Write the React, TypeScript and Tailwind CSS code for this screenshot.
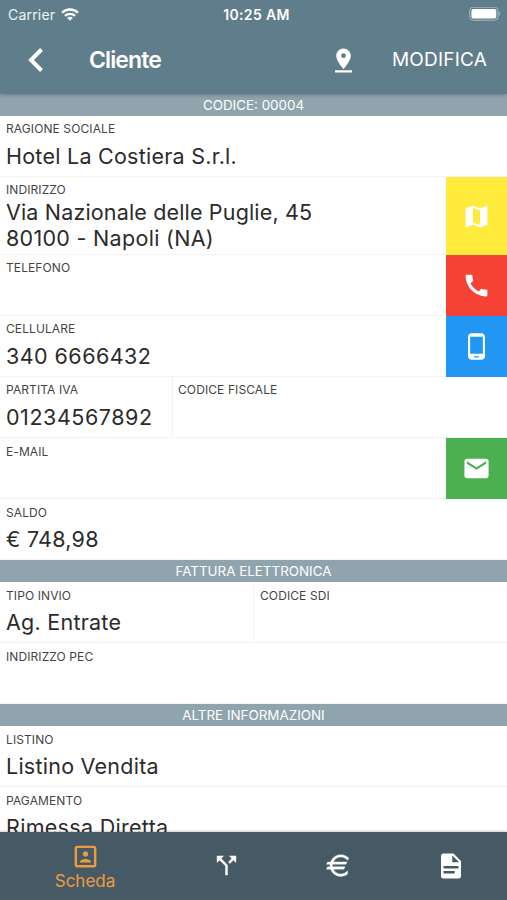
import type { ReactNode } from "react";
import {
    MdCall,
    MdCallSplit,
    MdEmail,
    MdMap,
    MdPhoneAndroid,
    MdPinDrop,
    MdPortrait,
} from "react-icons/md";

const SectionBar = ({ title }: { title: string }) => (
    <div className="h-[22px] shrink-0 bg-[#90a4ae] text-center text-[13.4px] leading-[22px] text-white">
        {title}
    </div>
);

type FieldProps = {
    label: string;
    value?: ReactNode;
    className?: string;
    valueClass?: string;
};

const Field = ({
    label,
    value,
    className = "flex-1",
    valueClass = "pt-[5.6px] tracking-[0.25px]",
}: FieldProps) => (
    <div className={`h-full pt-[5.35px] pl-1.5 ${className}`}>
        <div className="text-[12px] leading-4 tracking-[0.1px] text-[#444]">{label}</div>
        <div className={`text-[21.5px] leading-[26px] whitespace-nowrap text-[#2b2b2b] ${valueClass}`}>
            {value}
        </div>
    </div>
);

const Row = ({ children, height = "h-[61.05px]" }: { children: ReactNode; height?: string }) => (
    <div className={`flex shrink-0 shadow-[inset_0_-1px_0_#f3f3f3] ${height}`}>{children}</div>
);

const Action = ({ color, children }: { color: string; children: ReactNode }) => (
    <button className={`flex h-full w-[61px] items-center justify-center text-white ${color}`}>
        {children}
    </button>
);

const StatusBar = () => (
    <div className="grid h-7 grid-cols-3 items-center pr-[6px] pl-2 text-[14px] text-white">
        <div className="flex items-center gap-[6px] tracking-[0.2px] text-white/90">
            Carrier
            <svg width="18" height="13" viewBox="0 0 18 13" fill="none" stroke="white" strokeWidth="2.3">
                <path d="M1 4.8a11.4 11.4 0 0 1 16 0" />
                <path d="M4 7.9a7.2 7.2 0 0 1 10 0" />
                <path d="M9 12.8 6.2 10a4 4 0 0 1 5.6 0z" fill="white" stroke="none" />
            </svg>
        </div>
        <div className="pl-1 text-center font-semibold tracking-[0.35px] whitespace-nowrap">
            10:25 AM
        </div>
        <svg className="justify-self-end" width="32" height="15" viewBox="0 0 32 15">
            <rect x="0.7" y="0.2" width="28.3" height="13" rx="3.5" fill="none" stroke="#a9bac3" strokeWidth="1" />
            <rect x="2.4" y="1.9" width="24.9" height="9.6" rx="2" fill="white" />
            <path d="M30 4.500q2 2.200 0 4.400z" fill="#a9bac3" />
        </svg>
    </div>
);

const Header = () => (
    <header className="relative z-10 h-[94px] shrink-0 bg-[#607d8b] text-white shadow-[0_1px_4px_rgba(0,0,0,0.25)]">
        <StatusBar />
        <div className="flex h-[64px] items-center pr-5 pl-[27px]">
            <svg width="17" height="26" viewBox="0 0 17 26" fill="none" stroke="white" strokeWidth="4">
                <path d="M14.500 2.500 4 13l10.500 10.500" />
            </svg>
            <h1 className="ml-[45px] pt-px text-[23px] font-semibold tracking-[-0.9px]">Cliente</h1>
            <MdPinDrop className="ml-auto size-[29px]" />
            <span className="ml-[34px] pt-px text-[19px] tracking-[0.2px]">MODIFICA</span>
        </div>
    </header>
);

const TabBar = () => (
    <nav className="relative z-10 flex h-[68.5px] shrink-0 bg-[#455a64] text-white shadow-[0_-1px_2px_rgba(0,0,0,0.2)]">
        <div className="flex w-[170px] flex-col items-center pt-[10.500px] text-[#f09a40]">
            <MdPortrait className="size-[29px]" />
            <span className="-mt-[1.500px] text-[17px] leading-[22px]">Scheda</span>
        </div>
        <div className="flex w-[112px] items-center justify-center">
            <MdCallSplit className="size-[29px]" />
        </div>
        <div className="flex w-[112px] items-center justify-center">
            <svg className="size-[29px]" viewBox="0 0 24 24" fill="currentColor" stroke="currentColor" strokeWidth="0.3">
                <path d="M7.07 11 7 12l.07 1h10.28l-.85 2H7.67c1.13 2.36 3.54 4 6.33 4 2.23 0 4.22-1.04 5.5-2.67v2.79C18 20.3 16.07 21 14 21c-3.92 0-7.25-2.5-8.5-6H2l1-2h2.05L5 12l.05-1H2l1-2h2.5C6.75 5.5 10.08 3 14 3c2.5 0 4.8 1.04 6.43 2.71l-.86 2.04C18.29 6.08 16.27 5 14 5c-2.79 0-5.2 1.64-6.33 4h11.37l-.85 2z" />
            </svg>
        </div>
        <div className="flex w-[113px] items-center justify-center">
            <svg className="size-[30px]" viewBox="0 0 24 24" fill="currentColor">
                <path d="M13 9h5.5L13 3.500V9M6 2h8l6 6v12a2 2 0 0 1-2 2H6a2 2 0 0 1-2-2V4a2 2 0 0 1 2-2m9 16v-2H6v2h9m3-4v-2H6v2z" />
            </svg>
        </div>
    </nav>
);

const App = () => {
    return (
        <div className="flex h-screen w-full flex-col overflow-hidden bg-white font-[Inter,sans-serif]">
            <Header />
            <main className="flex min-h-0 flex-1 flex-col overflow-hidden">
                <SectionBar title="CODICE: 00004" />
                <Row>
                    <Field label="RAGIONE SOCIALE" value="Hotel La Costiera S.r.l." />
                </Row>
                <Row height="h-[78px]">
                    <Field
                        label="INDIRIZZO"
                        valueClass="pt-[1px]"
                        value={
                            <>
                                <p className="tracking-[0.16px]">Via Nazionale delle Puglie, 45</p>
                                <p className="tracking-[0.3px]">80100 - Napoli (NA)</p>
                            </>
                        }
                    />
                    <Action color="bg-[#ffeb3b]">
                        <MdMap className="size-[29px]" />
                    </Action>
                </Row>
                <Row>
                    <Field label="TELEFONO" />
                    <Action color="bg-[#f44336]">
                        <MdCall className="size-[29px]" />
                    </Action>
                </Row>
                <Row>
                    <Field label="CELLULARE" value="340 6666432" valueClass="pt-[5.6px] tracking-[0.45px]" />
                    <Action color="bg-[#2196f3]">
                        <MdPhoneAndroid className="size-[29px]" />
                    </Action>
                </Row>
                <Row>
                    <Field
                        label="PARTITA IVA"
                        value="01234567892"
                        className="w-[173px] border-r border-[#f3f3f3]"
                        valueClass="pt-[5.6px] tracking-[0.55px]"
                    />
                    <Field label="CODICE FISCALE" className="-ml-px flex-1" />
                </Row>
                <Row>
                    <Field label="E-MAIL" />
                    <Action color="bg-[#4caf50]">
                        <MdEmail className="size-[29px]" />
                    </Action>
                </Row>
                <Row>
                    <Field label="SALDO" value="€ 748,98" />
                </Row>
                <SectionBar title="FATTURA ELETTRONICA" />
                <Row>
                    <Field label="TIPO INVIO" value="Ag. Entrate" className="w-[254px] border-r border-[#f3f3f3]" />
                    <Field label="CODICE SDI" />
                </Row>
                <Row>
                    <Field label="INDIRIZZO PEC" />
                </Row>
                <SectionBar title="ALTRE INFORMAZIONI" />
                <Row>
                    <Field label="LISTINO" value="Listino Vendita" />
                </Row>
                <Row>
                    <Field label="PAGAMENTO" value="Rimessa Diretta" valueClass="pt-[5.6px] tracking-[0.3px]" />
                </Row>
            </main>
            <TabBar />
        </div>
    );
};

export default App;
